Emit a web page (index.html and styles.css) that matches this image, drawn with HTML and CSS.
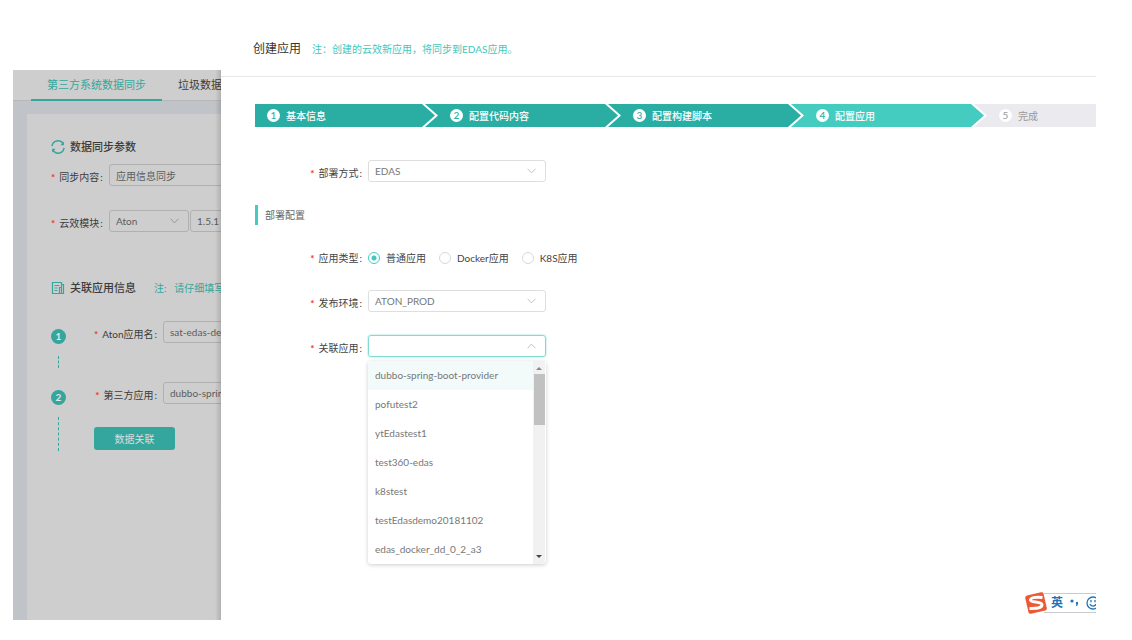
FILE: index.html
```html
<!DOCTYPE html>
<html lang="zh-CN">
<head>
<meta charset="utf-8">
<title>创建应用</title>
<link rel="stylesheet" href="styles.css">
</head>
<body>
<div class="page">
  <aside class="panel">
    <nav class="tabs">
      <a class="tab tab-active" href="#sync">第三方系统数据同步</a>
      <a class="tab" href="#trash">垃圾数据</a>
    </nav>
    <div class="card">
      <h2 class="card-title">
        <svg class="title-icon" viewBox="0 0 14 14"><path d="M1 6.2A6 6 0 0 1 12 3.6M13 7.8A6 6 0 0 1 2 10.4" fill="none" stroke="currentColor" stroke-width="1.5"/><path d="M12.9 1.6v3.6H9.4zM1.1 12.4V8.8h3.5z" fill="currentColor"/></svg>
        数据同步参数
      </h2>
      <div class="line">
        <label class="label line-label" for="content">同步内容</label>
        <input class="field field-wide" id="content" value="应用信息同步">
      </div>
      <div class="line">
        <label class="label line-label" for="module">云效模块</label>
        <div class="select-box module-box">
          <select class="field" id="module"><option>Aton</option></select>
          <svg class="chevron" viewBox="0 0 8 5"><path d="M.5.5 4 4.2 7.5.5"/></svg>
        </div>
        <input class="field field-wide version" aria-label="版本" value="1.5.1">
      </div>
      <h2 class="card-title card-title-second">
        <svg class="title-icon" viewBox="0 0 14 14"><path d="M10.500 12.500h-9v-11h9v2M3.500 4.500h5M3.500 7h3M3.500 9.500h3M8.500 12V6.500h2M10.500 3.500h2v9h-2z" fill="none" stroke="currentColor" stroke-width="1.2"/></svg>
        关联应用信息
        <span class="note">注:&nbsp;&nbsp; 请仔细填写</span>
      </h2>
      <div class="timeline">
        <div class="track"><span class="node">1</span><span class="dash dash-short"></span></div>
        <div class="line">
          <label class="label time-label" for="aton">Aton应用名</label>
          <input class="field field-wide" id="aton" value="sat-edas-demo">
        </div>
        <div class="track"><span class="node">2</span><span class="dash dash-long"></span></div>
        <div>
          <div class="line">
            <label class="label time-label" for="third">第三方应用</label>
            <input class="field field-wide" id="third" value="dubbo-spring-boot">
          </div>
          <button class="link-button" type="button">数据关联</button>
        </div>
      </div>
    </div>
  </aside>

  <main class="drawer">
    <header class="drawer-head">
      <h1 class="drawer-title">创建应用</h1>
      <span class="drawer-note">注：创建的云效新应用，将同步到EDAS应用。</span>
    </header>
    <div class="drawer-body">
      <ol class="steps">
        <li class="step"><span class="num">1</span>基本信息</li>
        <li class="step"><span class="num">2</span>配置代码内容</li>
        <li class="step"><span class="num">3</span>配置构建脚本</li>
        <li class="step step-current"><span class="num">4</span>配置应用</li>
        <li class="step step-todo"><span class="num">5</span>完成</li>
      </ol>
      <form class="form">
        <div class="row">
          <label class="label row-label" for="mode">部署方式</label>
          <div class="select-box">
            <select class="field" id="mode"><option>EDAS</option></select>
            <svg class="chevron" viewBox="0 0 8 5"><path d="M.5.5 4 4.2 7.5.5"/></svg>
          </div>
        </div>
        <h2 class="section">部署配置</h2>
        <div class="row" role="radiogroup" aria-labelledby="type-label">
          <span class="label row-label" id="type-label">应用类型</span>
          <div class="radios">
            <label class="radio"><input type="radio" name="type" checked>普通应用</label>
            <label class="radio"><input type="radio" name="type">Docker应用</label>
            <label class="radio"><input type="radio" name="type">K8S应用</label>
          </div>
        </div>
        <div class="row">
          <label class="label row-label" for="env">发布环境</label>
          <div class="select-box">
            <select class="field" id="env"><option>ATON_PROD</option></select>
            <svg class="chevron" viewBox="0 0 8 5"><path d="M.5.5 4 4.2 7.5.5"/></svg>
          </div>
        </div>
        <div class="row">
          <label class="label row-label" for="app">关联应用</label>
          <div class="select-box">
            <input class="field field-open" id="app" role="combobox" aria-expanded="true" aria-controls="apps">
            <svg class="chevron" viewBox="0 0 8 5"><path d="M.5 4.500 4 .8l3.500 3.700"/></svg>
            <div class="menu">
              <ul class="options" id="apps" role="listbox">
                <li class="option option-active" role="option">dubbo-spring-boot-provider</li>
                <li class="option" role="option">pofutest2</li>
                <li class="option" role="option">ytEdastest1</li>
                <li class="option" role="option">test360-edas</li>
                <li class="option" role="option">k8stest</li>
                <li class="option" role="option">testEdasdemo20181102</li>
                <li class="option" role="option">edas_docker_dd_0_2_a3</li>
              </ul>
              <div class="scrollbar">
                <svg class="scroll-arrow" viewBox="0 0 6 3"><path d="M0 3h6L3 0z" fill="#8a8a8a"/></svg>
                <span class="thumb"></span>
                <svg class="scroll-arrow" viewBox="0 0 6 3"><path d="M0 0h6L3 3z" fill="#444"/></svg>
              </div>
            </div>
          </div>
        </div>
      </form>
    </div>
    <div class="ime">
      <svg class="ime-logo" viewBox="0 0 24 24"><path d="M3 4.500 17 1.200q2-.4 2.500 1.400L22.800 17q.3 2-1.500 2.500L7 22.800q-2 .3-2.500-1.500L1.200 7Q1 5 3 4.500z" fill="#ec5a35"/><path d="M18.500 6.500Q7 5.500 6.500 9c0 2.800 11.500 1.200 11.500 4.800 0 3.500-6 3.800-12.500 3.600" fill="none" stroke="#fff" stroke-width="3"/></svg>
      <span class="ime-bar">
        <span class="ime-text">英</span>
        <svg class="ime-dots" viewBox="0 0 9 8"><circle cx="2" cy="2" r="1.600" fill="#2274b8"/><path d="M6 3h2v1.800Q8 7 5.800 7.600 6.800 6.200 6 5z" fill="#2274b8"/></svg>
        <svg class="ime-face" viewBox="0 0 14 14"><g fill="none" stroke="#2274b8" stroke-width="1.300"><circle cx="7" cy="7" r="6"/><path d="M5 4v2.200M9 4v2.200M3.800 8.200q3.200 4 6.400 0"/></g></svg>
      </span>
    </div>
  </main>
</div>
</body>
</html>
```
FILE: styles.css
```css
* { box-sizing: border-box; }

body {
  margin: 0;
  background: #fff;
  color: #444;
  font: 10px/20px Lato, "Noto Sans CJK SC", sans-serif;
}

h1, h2, ol, ul { margin: 0; padding: 0; list-style: none; font-weight: 400; }

input, select, button { font: inherit; color: inherit; }

.page {
  display: grid;
  grid-template-columns: minmax(0, 208fr) minmax(0, 875fr);
  min-height: 100vh;
  padding: 0 36px 20px 13px;
}

/* Dimmed page behind the drawer */
.panel {
  position: relative;
  display: flex;
  flex-direction: column;
  margin-top: 70px;
  overflow: hidden;
  background: #c0c3c8;
  color: #3c3c3c;
  white-space: nowrap;
}

.panel::after {
  content: "";
  position: absolute;
  inset: 0 0 0 auto;
  width: 6px;
  background: linear-gradient(90deg, transparent, rgba(0, 0, 0, 0.14));
}

.tabs {
  display: flex;
  padding-left: 18px;
  background: #cecece;
  border-bottom: 1px solid #b8b8b8;
  font-size: 11px;
}

.tab {
  flex: none;
  height: 31px;
  margin-bottom: -1px;
  padding: 5px 16px 0;
  color: #3c3c3c;
  text-decoration: none;
}

.tab-active {
  color: #35a69d;
  border-bottom: 2px solid #35a69d;
}

.card {
  flex: 1;
  margin: 13px 0 0 14px;
  padding: 23px 0 0 24px;
  background: #cecece;
}

.card-title {
  display: flex;
  align-items: center;
  gap: 5px;
  margin-bottom: 7px;
  font-size: 11px;
  font-weight: 500;
}

.card-title-second { margin: 45px 0 23px; }

.title-icon { flex: none; width: 14px; height: 14px; color: #35a69d; }

.note { margin-left: 13px; color: #35a69d; font-size: 10px; font-weight: 400; }

.label { white-space: nowrap; }

.label::before {
  content: "*";
  margin-right: 4px;
  color: #f0341f;
  font-weight: 700;
}

.label::after { content: ":"; margin-left: 1px; }

.line { display: flex; align-items: flex-start; margin-bottom: 23px; }

.line-label { flex: none; width: 58px; padding-top: 3px; }

.time-label { flex: none; width: 69px; padding-top: 3px; padding-right: 6px; text-align: right; }

.field {
  display: block;
  width: 100%;
  height: 22px;
  padding: 0 6px;
  border: 1px solid #dedede;
  border-radius: 3px;
  outline: 0;
  appearance: none;
  background: transparent;
  color: #777;
}

.panel .field { border-color: #b0b0b0; color: #5c5c5c; }

.field-wide { flex: none; width: 160px; }

.version { margin-left: 1px; }

.select-box { position: relative; flex: none; width: 178px; }

.module-box { width: 80px; }

.chevron {
  position: absolute;
  top: 8px;
  right: 10px;
  width: 9px;
  height: 6px;
  fill: none;
  stroke: #bbb;
  stroke-width: 0.8;
  pointer-events: none;
}

.panel .chevron { stroke: #8e8e8e; }

.timeline { display: grid; grid-template-columns: 15px 1fr; column-gap: 28px; }

.timeline .line { margin-bottom: 38px; }

.timeline > div:last-child .line { margin-bottom: 22px; }

.track { display: flex; flex-direction: column; align-items: center; }

.node {
  width: 15px;
  height: 15px;
  margin: 8px 0 12px;
  border-radius: 50%;
  background: #35a69d;
  color: #e4e4e4;
  font-size: 10px;
  font-weight: 700;
  line-height: 15px;
  text-align: center;
}

.dash { border-left: 1px dashed #35a69d; }

.dash-short { height: 12px; }

.dash-long { height: 34px; }

.link-button {
  width: 81px;
  height: 23px;
  padding: 0;
  border: 0;
  border-radius: 3px;
  background: #35a69d;
  color: #dcdcdc;
}

/* Drawer */
.drawer { position: relative; background: #fff; }

.drawer-head {
  display: flex;
  gap: 11px;
  padding: 39px 0 17px 32px;
  border-bottom: 1px solid #e8e8e8;
}

.drawer-title { color: #333; font-size: 12px; line-height: 20px; }

.drawer-note { color: #3fc8bd; }

.drawer-body { padding: 27px 0 0 34px; }

.steps {
  display: grid;
  grid-template-columns: repeat(4, 183fr) 109fr;
}

.step {
  position: relative;
  z-index: 4;
  display: flex;
  align-items: center;
  gap: 6px;
  height: 23px;
  margin-left: -13px;
  padding-left: 25px;
  background: #fff;
  color: #fff;
  font-weight: 500;
  clip-path: polygon(0 0, calc(100% - 13px) 0, 100% 50%, calc(100% - 13px) 100%, 0 100%);
}

.step::before {
  content: "";
  position: absolute;
  z-index: -1;
  inset: 0 3px 0 0;
  background: #2aaea4;
  clip-path: polygon(0 0, calc(100% - 13px) 0, 100% 50%, calc(100% - 13px) 100%, 0 100%);
}

.step:first-child { margin-left: 0; padding-left: 12px; }

.step:nth-child(2) { z-index: 3; }

.step:nth-child(3) { z-index: 2; }

.step:nth-child(4) { z-index: 1; }

.step:nth-child(5) { z-index: 0; }

.step-current::before { background: #45ccc1; }

.step-todo {
  color: #999;
  font-weight: 400;
  clip-path: none;
}

.step-todo::before { right: 0; background: #ebebef; clip-path: none; }

.num {
  width: 13px;
  height: 13px;
  border-radius: 50%;
  background: #fff;
  color: #2aaea4;
  line-height: 13px;
  text-align: center;
}

.step-todo .num { color: #999; }

.form { padding-top: 33px; }

.row { display: flex; align-items: flex-start; }

.row + .row { margin-top: 22px; }

.row-label { flex: none; width: 113px; padding: 3px 6px 0 0; text-align: right; }

.section {
  margin: 22px 0 20px;
  padding-left: 7px;
  border-left: 3px solid #45ccc1;
  color: #666;
  font-size: 10px;
  line-height: 20px;
}

.radios { display: flex; gap: 13px; padding-top: 3px; }

.radio { display: flex; align-items: center; gap: 6px; }

.radio input {
  width: 12px;
  height: 12px;
  margin: 0;
  border: 1px solid #d9d9d9;
  border-radius: 50%;
  appearance: none;
}

.radio input:checked {
  border-color: #45ccc1;
  background: radial-gradient(circle, #3fc8bd 2px, transparent 3px);
}

.field-open { border-color: #7fdcd5; box-shadow: 0 0 2px #7fdcd5; }

.menu {
  position: absolute;
  top: 26px;
  left: 0;
  right: 0;
  display: flex;
  padding-right: 1px;
  border-radius: 3px;
  background: #fff;
  box-shadow: 0 1px 4px rgba(0, 0, 0, 0.2);
}

.options { flex: 1; }

.option { height: 29px; padding-left: 7px; color: #777; line-height: 29px; }

.option-active { background: #f2fbfa; }

.scrollbar {
  display: flex;
  flex-direction: column;
  align-items: center;
  width: 12px;
  padding: 6px 0;
  background: #f1f1f1;
}

.scroll-arrow { width: 6px; height: 3px; }

.thumb { width: 11px; height: 51px; margin: 4px 0 auto; background: #c1c1c1; }

/* Input method bar floating over the corner */
.ime {
  position: absolute;
  right: 0;
  bottom: 5px;
  display: flex;
  align-items: center;
}

.ime-logo { z-index: 1; width: 24px; height: 24px; margin-right: -4px; }

.ime-bar {
  display: flex;
  align-items: center;
  gap: 7px;
  width: 52px;
  height: 20px;
  padding-left: 7px;
  overflow: hidden;
  border: solid #c8ccd0;
  border-width: 1px 0;
  background: #fff;
}

.ime-text { flex: none; color: #2274b8; font-size: 12px; font-weight: 700; }

.ime-dots { flex: none; width: 9px; height: 8px; }

.ime-face { flex: none; width: 14px; height: 14px; }
```
